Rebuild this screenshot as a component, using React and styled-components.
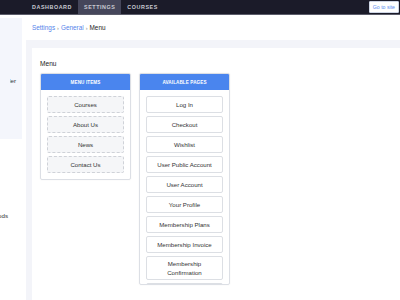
import React from 'react';
import styled, { createGlobalStyle } from 'styled-components';

const GlobalStyle = createGlobalStyle`
  html, body {
    margin: 0;
    padding: 0;
    width: 400px;
    height: 300px;
    overflow: hidden;
    background: #ffffff;
    font-family: "Liberation Sans", Arial, sans-serif;
  }
`;

const Page = styled.div`
  width: 400px;
  height: 300px;
  display: flex;
  flex-direction: column;
  overflow: hidden;
`;

const TopBar = styled.header`
  height: 14px;
  flex: none;
  background: #1b1b29;
  display: flex;
  align-items: stretch;
  justify-content: space-between;
  padding-left: 26px;
  border-bottom: 1px solid #5b5c6a;
`;

const Tabs = styled.nav`
  display: flex;
`;

const Tab = styled.a`
  display: flex;
  align-items: center;
  padding: 0 6px;
  font-size: 5.4px;
  font-weight: bold;
  letter-spacing: 0.55px;
  color: #c9cad2;
  background: ${p => (p.active ? '#45465a' : 'transparent')};
  text-decoration: none;
`;

const SiteButton = styled.a`
  align-self: center;
  height: 10px;
  margin-right: 1px;
  padding: 0 3px;
  display: flex;
  align-items: center;
  background: #ffffff;
  border: 1px solid #cfd6e6;
  border-radius: 1px;
  color: #5b8def;
  font-size: 5.2px;
  text-decoration: none;
`;

const Body = styled.div`
  flex: 1;
  display: flex;
  min-height: 0;
`;

const Sidebar = styled.aside`
  width: 22px;
  flex: none;
  display: flex;
  flex-direction: column;
`;

const SidePanel = styled.div`
  margin-top: 3px;
  height: 121px;
  background: #f4f6fc;
  padding-top: 59px;
  box-sizing: border-box;
`;

const SideItem = styled.div`
  display: flex;
  justify-content: flex-end;
  overflow: hidden;
  white-space: nowrap;
  margin-left: ${p => p.left || 0}px;
  padding-right: ${p => p.pad}px;
  margin-top: ${p => p.top || 0}px;
  font-size: 6.2px;
  color: #333;
`;

const Main = styled.main`
  flex: 1;
  margin-left: 4px;
  display: flex;
  flex-direction: column;
  min-width: 0;
`;

const Crumbs = styled.div`
  height: 25px;
  flex: none;
  display: flex;
  align-items: center;
  gap: 2px;
  padding-left: 6px;
  font-size: 6.4px;
  color: #222;
`;

const Crumb = styled.a`
  color: #5584ea;
  text-decoration: none;
`;

const Sep = styled.span`
  color: #888;
  font-size: 5.5px;
`;

const Content = styled.div`
  flex: 1;
  background: #f3f4f9;
  padding: 8px 0 0 6px;
  display: flex;
  min-height: 0;
`;

const Card = styled.section`
  flex: 1;
  background: #ffffff;
  padding: 12px 0 0 8px;
`;

const Title = styled.div`
  font-size: 6.6px;
  color: #222;
  margin-bottom: 6px;
`;

const Columns = styled.div`
  display: flex;
  align-items: flex-start;
  gap: 8px;
`;

const Panel = styled.div`
  width: 91px;
  border: 1px solid #dcdfe5;
  border-radius: 2px;
  box-sizing: border-box;
  box-shadow: 0 0 2px rgba(0, 0, 0, 0.06);
  overflow: hidden;
`;

const PanelHead = styled.div`
  height: 16px;
  background: #4a85ee;
  color: #ffffff;
  display: flex;
  align-items: center;
  justify-content: center;
  font-size: 4.6px;
  font-weight: bold;
  letter-spacing: 0.1px;
`;

const List = styled.div`
  display: flex;
  flex-direction: column;
  gap: 3px;
  padding: 6px 6px 6px;
  height: ${p => (p.h ? `${p.h}px` : 'auto')};
  overflow: hidden;
  box-sizing: border-box;
`;

const Item = styled.div`
  flex: none;
  min-height: 17px;
  box-sizing: border-box;
  display: flex;
  align-items: center;
  justify-content: center;
  text-align: center;
  padding: 2px 5px;
  line-height: 9px;
  font-size: 6.1px;
  color: #333;
  border-radius: 2px;
  background: ${p => (p.dashed ? '#f5f6f8' : '#ffffff')};
  border: 1px ${p => (p.dashed ? 'dashed #cfd2d8' : 'solid #dcdfe4')};
`;

const menuItems = ['Courses', 'About Us', 'News', 'Contact Us'];

const pages = [
  'Log In',
  'Checkout',
  'Wishlist',
  'User Public Account',
  'User Account',
  'Your Profile',
  'Membership Plans',
  'Membership Invoice',
  'Membership Confirmation',
  'Order Confirmation',
];

export default function App() {
  return (
    <Page>
      <GlobalStyle />
      <TopBar>
        <Tabs>
          <Tab>DASHBOARD</Tab>
          <Tab active>SETTINGS</Tab>
          <Tab>COURSES</Tab>
        </Tabs>
        <SiteButton>Go to site</SiteButton>
      </TopBar>
      <Body>
        <Sidebar>
          <SidePanel>
            <SideItem left={10} pad={6}>Page Builder</SideItem>
          </SidePanel>
          <SideItem pad={14} top={73}>Payment Methods</SideItem>
        </Sidebar>
        <Main>
          <Crumbs>
            <Crumb>Settings</Crumb>
            <Sep>›</Sep>
            <Crumb>General</Crumb>
            <Sep>›</Sep>
            <span>Menu</span>
          </Crumbs>
          <Content>
            <Card>
              <Title>Menu</Title>
              <Columns>
                <Panel>
                  <PanelHead>MENU ITEMS</PanelHead>
                  <List>
                    {menuItems.map(m => (
                      <Item dashed key={m}>{m}</Item>
                    ))}
                  </List>
                </Panel>
                <Panel>
                  <PanelHead>AVAILABLE PAGES</PanelHead>
                  <List h={194}>
                    {pages.map(p => (
                      <Item key={p}>{p}</Item>
                    ))}
                  </List>
                </Panel>
              </Columns>
            </Card>
          </Content>
        </Main>
      </Body>
    </Page>
  );
}
